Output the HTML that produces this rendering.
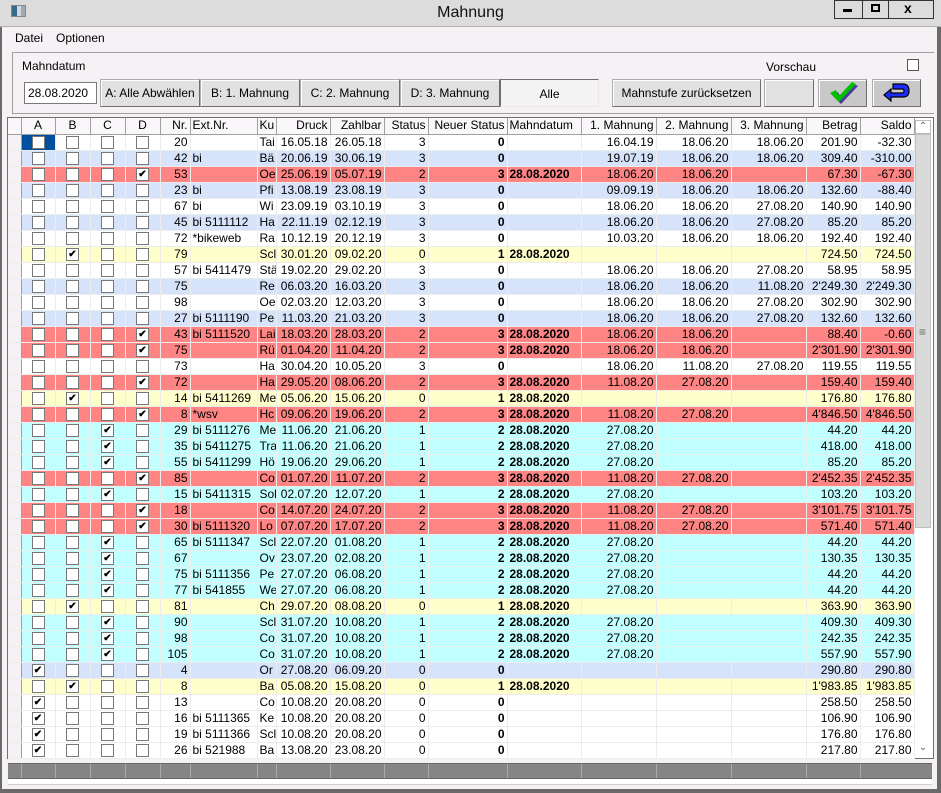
<!DOCTYPE html>
<html><head><meta charset="utf-8"><style>
*{box-sizing:border-box;margin:0;padding:0}
body{width:941px;height:793px;background:#f5f1f5;font-family:"Liberation Sans",sans-serif;font-size:12px;color:#000;position:relative;overflow:hidden}
.a{position:absolute}
.btn{position:absolute;top:79px;height:28px;background:#e1e1e1;border:1px solid #adadad;border-right-color:#6e6e6e;border-bottom-color:#6e6e6e;box-shadow:inset 1px 1px 0 #fff;text-align:center;line-height:26px;font-size:12px}
table{position:absolute;left:8px;top:118px;border-collapse:collapse;table-layout:fixed;width:906px}
td,th{height:16px;padding:0 2px;border-right:1px solid #ececec;border-bottom:1px solid #ececec;white-space:nowrap;overflow:hidden;font-weight:normal;text-align:right;line-height:15px}
th{background:#f9f7f9;border-right:1px solid #a0a0a0;border-bottom:1px solid #a0a0a0}
td.c,th.c{text-align:center}
td.l,th.l{text-align:left}
td.b{font-weight:bold}
td.h{background:#f5f1f5;border-right:1px solid #a0a0a0}
.cb{display:inline-block;width:13px;height:13px;border:1px solid #777;background:#fff;vertical-align:middle;font-size:10px;line-height:11px;text-align:center;font-weight:bold}
tr.w td{background:#fff}
tr.u td{background:#d7e3fa}
tr.r td{background:#ff8484}
tr.y td{background:#ffffcc}
tr.k td{background:#c2ffff}
tr td.h{background:#f5f1f5}
</style></head><body>
<!-- title bar -->
<div class="a" style="left:0;top:0;width:941px;height:27px;background:#dcdcdc;border-bottom:1px solid #b0b0b0"></div>
<div class="a" style="left:11px;top:5px;width:15px;height:12px;background:linear-gradient(90deg,#3a6a8a 0 40%,#d0d8e0 40% 70%,#a0a8b0 70%);border:1px solid #888"></div>
<div class="a" style="left:0;top:4px;width:941px;text-align:center;font-size:16px;color:#111">Mahnung</div>
<div class="a" style="left:834px;top:0;width:100px;height:19px;border:1px solid #333;background:#dcdcdc"></div>
<div class="a" style="left:862px;top:0;width:1px;height:19px;background:#333"></div>
<div class="a" style="left:888px;top:0;width:1px;height:19px;background:#333"></div>
<div class="a" style="left:843px;top:9px;width:9px;height:3px;background:#000"></div>
<div class="a" style="left:871px;top:4px;width:9px;height:8px;border:2px solid #000"></div>
<div class="a" style="left:904px;top:0;font-size:14px;font-weight:bold">x</div>
<div class="a" style="left:0;top:27px;width:2px;height:766px;background:#6a6a6a"></div>
<div class="a" style="left:937px;top:27px;width:4px;height:766px;background:#6a6a6a"></div>
<div class="a" style="left:0;top:789px;width:941px;height:4px;background:#6a6a6a"></div>
<!-- menu -->
<div class="a" style="left:15px;top:31px">Datei</div>
<div class="a" style="left:56px;top:31px">Optionen</div>
<!-- group -->
<div class="a" style="left:12px;top:52px;width:922px;height:62px;border:1px solid #a0a0a0;border-right:none"></div>
<div class="a" style="left:22px;top:59px">Mahndatum</div>
<div class="a" style="left:24px;top:82px;width:73px;height:22px;border:1px solid #7a7a7a;background:#fff;padding-left:3px;line-height:20px">28.08.2020</div>
<div class="btn" style="left:100px;width:100px">A: Alle Abwählen</div>
<div class="btn" style="left:200px;width:100px">B: 1. Mahnung</div>
<div class="btn" style="left:300px;width:100px">C: 2. Mahnung</div>
<div class="btn" style="left:400px;width:100px">D: 3. Mahnung</div>
<div class="btn" style="left:500px;width:99px;background:#f4f4f4;border-color:#6e6e6e #e8e8e8 #e8e8e8 #6e6e6e;box-shadow:none;line-height:28px">Alle</div>
<div class="btn" style="left:612px;width:149px">Mahnstufe zurücksetzen</div>
<div class="btn" style="left:764px;width:50px"></div>
<div class="btn" style="left:818px;width:49px;background:#c8c8c8">
<svg width="40" height="26" viewBox="0 0 40 26" style="position:absolute;left:4px;top:0"><path d="M9 15 L15 12 L18 18 L31 4 L35 6 L18 24 Z" fill="#4a3aa0"/><path d="M7 13 L13 10 L16 16 L29 2 L33 4 L16 22 Z" fill="#00c000"/></svg></div>
<div class="btn" style="left:872px;width:49px;background:#c8c8c8">
<svg width="40" height="26" viewBox="0 0 40 26" style="position:absolute;left:4px;top:0"><path d="M16 4 H26 Q32 4 32 11 Q32 17 26 17 H14 V21 L7 15 L14 9 V13 H25 Q27 13 27 11 Q27 9 25 9 H16 Z" fill="#1c2cff" stroke="#000" stroke-width="1.2"/></svg></div>
<div class="a" style="left:766px;top:60px">Vorschau</div>
<div class="a" style="left:907px;top:59px;width:12px;height:12px;border:1px solid #555;background:#fff"></div>
<!-- grid frame -->
<div class="a" style="left:7px;top:117px;width:927px;height:642px;border:1px solid #707070;background:#fff"></div>
<!-- scrollbar -->
<div class="a" style="left:914px;top:118px;width:18px;height:640px;background:#fff;border-left:1px solid #ddd"></div>
<div class="a" style="left:915px;top:120px;width:16px;height:14px;border:1px solid #bbb;background:#fff;text-align:center;font-size:10px;line-height:12px;color:#666">&#8963;</div>
<div class="a" style="left:915px;top:134px;width:16px;height:394px;background:#dadada;border:1px solid #c0c0c0"></div>
<div class="a" style="left:919px;top:325px;font-size:12px;color:#666">&#8801;</div>
<div class="a" style="left:915px;top:742px;width:16px;height:14px;text-align:center;font-size:10px;line-height:12px;color:#666">&#8964;</div>
<table>
<colgroup><col style="width:13px"><col style="width:34px"><col style="width:35px"><col style="width:35px"><col style="width:35px"><col style="width:30px"><col style="width:67px"><col style="width:19px"><col style="width:54px"><col style="width:54px"><col style="width:44px"><col style="width:79px"><col style="width:74px"><col style="width:75px"><col style="width:75px"><col style="width:75px"><col style="width:54px"><col style="width:54px"></colgroup>
<tr><th></th><th class="c">A</th><th class="c">B</th><th class="c">C</th><th class="c">D</th><th>Nr.</th><th class="l">Ext.Nr.</th><th class="l">Ku</th><th>Druck</th><th>Zahlbar</th><th>Status</th><th>Neuer Status</th><th class="l">Mahndatum</th><th>1. Mahnung</th><th>2. Mahnung</th><th>3. Mahnung</th><th>Betrag</th><th>Saldo</th></tr>
<tr class="w"><td class="h"></td><td class="c" style="background:#0050a0"><span class="cb"></span></td><td class="c"><span class="cb"></span></td><td class="c"><span class="cb"></span></td><td class="c"><span class="cb"></span></td><td>20</td><td class="l"></td><td class="l">Tai</td><td>16.05.18</td><td>26.05.18</td><td>3</td><td class="b">0</td><td class="l b"></td><td>16.04.19</td><td>18.06.20</td><td>18.06.20</td><td>201.90</td><td>-32.30</td></tr>
<tr class="u"><td class="h"></td><td class="c"><span class="cb"></span></td><td class="c"><span class="cb"></span></td><td class="c"><span class="cb"></span></td><td class="c"><span class="cb"></span></td><td>42</td><td class="l">bi</td><td class="l">Bä</td><td>20.06.19</td><td>30.06.19</td><td>3</td><td class="b">0</td><td class="l b"></td><td>19.07.19</td><td>18.06.20</td><td>18.06.20</td><td>309.40</td><td>-310.00</td></tr>
<tr class="r"><td class="h"></td><td class="c"><span class="cb"></span></td><td class="c"><span class="cb"></span></td><td class="c"><span class="cb"></span></td><td class="c"><span class="cb">✔</span></td><td>53</td><td class="l"></td><td class="l">Oe</td><td>25.06.19</td><td>05.07.19</td><td>2</td><td class="b">3</td><td class="l b">28.08.2020</td><td>18.06.20</td><td>18.06.20</td><td></td><td>67.30</td><td>-67.30</td></tr>
<tr class="u"><td class="h"></td><td class="c"><span class="cb"></span></td><td class="c"><span class="cb"></span></td><td class="c"><span class="cb"></span></td><td class="c"><span class="cb"></span></td><td>23</td><td class="l">bi</td><td class="l">Pfi</td><td>13.08.19</td><td>23.08.19</td><td>3</td><td class="b">0</td><td class="l b"></td><td>09.09.19</td><td>18.06.20</td><td>18.06.20</td><td>132.60</td><td>-88.40</td></tr>
<tr class="w"><td class="h"></td><td class="c"><span class="cb"></span></td><td class="c"><span class="cb"></span></td><td class="c"><span class="cb"></span></td><td class="c"><span class="cb"></span></td><td>67</td><td class="l">bi</td><td class="l">Wi</td><td>23.09.19</td><td>03.10.19</td><td>3</td><td class="b">0</td><td class="l b"></td><td>18.06.20</td><td>18.06.20</td><td>27.08.20</td><td>140.90</td><td>140.90</td></tr>
<tr class="u"><td class="h"></td><td class="c"><span class="cb"></span></td><td class="c"><span class="cb"></span></td><td class="c"><span class="cb"></span></td><td class="c"><span class="cb"></span></td><td>45</td><td class="l">bi 5111112</td><td class="l">Ha</td><td>22.11.19</td><td>02.12.19</td><td>3</td><td class="b">0</td><td class="l b"></td><td>18.06.20</td><td>18.06.20</td><td>27.08.20</td><td>85.20</td><td>85.20</td></tr>
<tr class="w"><td class="h"></td><td class="c"><span class="cb"></span></td><td class="c"><span class="cb"></span></td><td class="c"><span class="cb"></span></td><td class="c"><span class="cb"></span></td><td>72</td><td class="l">*bikeweb</td><td class="l">Ra</td><td>10.12.19</td><td>20.12.19</td><td>3</td><td class="b">0</td><td class="l b"></td><td>10.03.20</td><td>18.06.20</td><td>18.06.20</td><td>192.40</td><td>192.40</td></tr>
<tr class="y"><td class="h"></td><td class="c"><span class="cb"></span></td><td class="c"><span class="cb">✔</span></td><td class="c"><span class="cb"></span></td><td class="c"><span class="cb"></span></td><td>79</td><td class="l"></td><td class="l">Scl</td><td>30.01.20</td><td>09.02.20</td><td>0</td><td class="b">1</td><td class="l b">28.08.2020</td><td></td><td></td><td></td><td>724.50</td><td>724.50</td></tr>
<tr class="w"><td class="h"></td><td class="c"><span class="cb"></span></td><td class="c"><span class="cb"></span></td><td class="c"><span class="cb"></span></td><td class="c"><span class="cb"></span></td><td>57</td><td class="l">bi 5411479</td><td class="l">Stä</td><td>19.02.20</td><td>29.02.20</td><td>3</td><td class="b">0</td><td class="l b"></td><td>18.06.20</td><td>18.06.20</td><td>27.08.20</td><td>58.95</td><td>58.95</td></tr>
<tr class="u"><td class="h"></td><td class="c"><span class="cb"></span></td><td class="c"><span class="cb"></span></td><td class="c"><span class="cb"></span></td><td class="c"><span class="cb"></span></td><td>75</td><td class="l"></td><td class="l">Re</td><td>06.03.20</td><td>16.03.20</td><td>3</td><td class="b">0</td><td class="l b"></td><td>18.06.20</td><td>18.06.20</td><td>11.08.20</td><td>2'249.30</td><td>2'249.30</td></tr>
<tr class="w"><td class="h"></td><td class="c"><span class="cb"></span></td><td class="c"><span class="cb"></span></td><td class="c"><span class="cb"></span></td><td class="c"><span class="cb"></span></td><td>98</td><td class="l"></td><td class="l">Oe</td><td>02.03.20</td><td>12.03.20</td><td>3</td><td class="b">0</td><td class="l b"></td><td>18.06.20</td><td>18.06.20</td><td>27.08.20</td><td>302.90</td><td>302.90</td></tr>
<tr class="u"><td class="h"></td><td class="c"><span class="cb"></span></td><td class="c"><span class="cb"></span></td><td class="c"><span class="cb"></span></td><td class="c"><span class="cb"></span></td><td>27</td><td class="l">bi 5111190</td><td class="l">Pe</td><td>11.03.20</td><td>21.03.20</td><td>3</td><td class="b">0</td><td class="l b"></td><td>18.06.20</td><td>18.06.20</td><td>27.08.20</td><td>132.60</td><td>132.60</td></tr>
<tr class="r"><td class="h"></td><td class="c"><span class="cb"></span></td><td class="c"><span class="cb"></span></td><td class="c"><span class="cb"></span></td><td class="c"><span class="cb">✔</span></td><td>43</td><td class="l">bi 5111520</td><td class="l">Lai</td><td>18.03.20</td><td>28.03.20</td><td>2</td><td class="b">3</td><td class="l b">28.08.2020</td><td>18.06.20</td><td>18.06.20</td><td></td><td>88.40</td><td>-0.60</td></tr>
<tr class="r"><td class="h"></td><td class="c"><span class="cb"></span></td><td class="c"><span class="cb"></span></td><td class="c"><span class="cb"></span></td><td class="c"><span class="cb">✔</span></td><td>75</td><td class="l"></td><td class="l">Rü</td><td>01.04.20</td><td>11.04.20</td><td>2</td><td class="b">3</td><td class="l b">28.08.2020</td><td>18.06.20</td><td>18.06.20</td><td></td><td>2'301.90</td><td>2'301.90</td></tr>
<tr class="w"><td class="h"></td><td class="c"><span class="cb"></span></td><td class="c"><span class="cb"></span></td><td class="c"><span class="cb"></span></td><td class="c"><span class="cb"></span></td><td>73</td><td class="l"></td><td class="l">Ha</td><td>30.04.20</td><td>10.05.20</td><td>3</td><td class="b">0</td><td class="l b"></td><td>18.06.20</td><td>11.08.20</td><td>27.08.20</td><td>119.55</td><td>119.55</td></tr>
<tr class="r"><td class="h"></td><td class="c"><span class="cb"></span></td><td class="c"><span class="cb"></span></td><td class="c"><span class="cb"></span></td><td class="c"><span class="cb">✔</span></td><td>72</td><td class="l"></td><td class="l">Ha</td><td>29.05.20</td><td>08.06.20</td><td>2</td><td class="b">3</td><td class="l b">28.08.2020</td><td>11.08.20</td><td>27.08.20</td><td></td><td>159.40</td><td>159.40</td></tr>
<tr class="y"><td class="h"></td><td class="c"><span class="cb"></span></td><td class="c"><span class="cb">✔</span></td><td class="c"><span class="cb"></span></td><td class="c"><span class="cb"></span></td><td>14</td><td class="l">bi 5411269</td><td class="l">Me</td><td>05.06.20</td><td>15.06.20</td><td>0</td><td class="b">1</td><td class="l b">28.08.2020</td><td></td><td></td><td></td><td>176.80</td><td>176.80</td></tr>
<tr class="r"><td class="h"></td><td class="c"><span class="cb"></span></td><td class="c"><span class="cb"></span></td><td class="c"><span class="cb"></span></td><td class="c"><span class="cb">✔</span></td><td>8</td><td class="l">*wsv</td><td class="l">Hc</td><td>09.06.20</td><td>19.06.20</td><td>2</td><td class="b">3</td><td class="l b">28.08.2020</td><td>11.08.20</td><td>27.08.20</td><td></td><td>4'846.50</td><td>4'846.50</td></tr>
<tr class="k"><td class="h"></td><td class="c"><span class="cb"></span></td><td class="c"><span class="cb"></span></td><td class="c"><span class="cb">✔</span></td><td class="c"><span class="cb"></span></td><td>29</td><td class="l">bi 5111276</td><td class="l">Me</td><td>11.06.20</td><td>21.06.20</td><td>1</td><td class="b">2</td><td class="l b">28.08.2020</td><td>27.08.20</td><td></td><td></td><td>44.20</td><td>44.20</td></tr>
<tr class="k"><td class="h"></td><td class="c"><span class="cb"></span></td><td class="c"><span class="cb"></span></td><td class="c"><span class="cb">✔</span></td><td class="c"><span class="cb"></span></td><td>35</td><td class="l">bi 5411275</td><td class="l">Tra</td><td>11.06.20</td><td>21.06.20</td><td>1</td><td class="b">2</td><td class="l b">28.08.2020</td><td>27.08.20</td><td></td><td></td><td>418.00</td><td>418.00</td></tr>
<tr class="k"><td class="h"></td><td class="c"><span class="cb"></span></td><td class="c"><span class="cb"></span></td><td class="c"><span class="cb">✔</span></td><td class="c"><span class="cb"></span></td><td>55</td><td class="l">bi 5411299</td><td class="l">Hö</td><td>19.06.20</td><td>29.06.20</td><td>1</td><td class="b">2</td><td class="l b">28.08.2020</td><td>27.08.20</td><td></td><td></td><td>85.20</td><td>85.20</td></tr>
<tr class="r"><td class="h"></td><td class="c"><span class="cb"></span></td><td class="c"><span class="cb"></span></td><td class="c"><span class="cb"></span></td><td class="c"><span class="cb">✔</span></td><td>85</td><td class="l"></td><td class="l">Co</td><td>01.07.20</td><td>11.07.20</td><td>2</td><td class="b">3</td><td class="l b">28.08.2020</td><td>11.08.20</td><td>27.08.20</td><td></td><td>2'452.35</td><td>2'452.35</td></tr>
<tr class="k"><td class="h"></td><td class="c"><span class="cb"></span></td><td class="c"><span class="cb"></span></td><td class="c"><span class="cb">✔</span></td><td class="c"><span class="cb"></span></td><td>15</td><td class="l">bi 5411315</td><td class="l">Sol</td><td>02.07.20</td><td>12.07.20</td><td>1</td><td class="b">2</td><td class="l b">28.08.2020</td><td>27.08.20</td><td></td><td></td><td>103.20</td><td>103.20</td></tr>
<tr class="r"><td class="h"></td><td class="c"><span class="cb"></span></td><td class="c"><span class="cb"></span></td><td class="c"><span class="cb"></span></td><td class="c"><span class="cb">✔</span></td><td>18</td><td class="l"></td><td class="l">Co</td><td>14.07.20</td><td>24.07.20</td><td>2</td><td class="b">3</td><td class="l b">28.08.2020</td><td>11.08.20</td><td>27.08.20</td><td></td><td>3'101.75</td><td>3'101.75</td></tr>
<tr class="r"><td class="h"></td><td class="c"><span class="cb"></span></td><td class="c"><span class="cb"></span></td><td class="c"><span class="cb"></span></td><td class="c"><span class="cb">✔</span></td><td>30</td><td class="l">bi 5111320</td><td class="l">Lo</td><td>07.07.20</td><td>17.07.20</td><td>2</td><td class="b">3</td><td class="l b">28.08.2020</td><td>11.08.20</td><td>27.08.20</td><td></td><td>571.40</td><td>571.40</td></tr>
<tr class="k"><td class="h"></td><td class="c"><span class="cb"></span></td><td class="c"><span class="cb"></span></td><td class="c"><span class="cb">✔</span></td><td class="c"><span class="cb"></span></td><td>65</td><td class="l">bi 5111347</td><td class="l">Scl</td><td>22.07.20</td><td>01.08.20</td><td>1</td><td class="b">2</td><td class="l b">28.08.2020</td><td>27.08.20</td><td></td><td></td><td>44.20</td><td>44.20</td></tr>
<tr class="k"><td class="h"></td><td class="c"><span class="cb"></span></td><td class="c"><span class="cb"></span></td><td class="c"><span class="cb">✔</span></td><td class="c"><span class="cb"></span></td><td>67</td><td class="l"></td><td class="l">Ov</td><td>23.07.20</td><td>02.08.20</td><td>1</td><td class="b">2</td><td class="l b">28.08.2020</td><td>27.08.20</td><td></td><td></td><td>130.35</td><td>130.35</td></tr>
<tr class="k"><td class="h"></td><td class="c"><span class="cb"></span></td><td class="c"><span class="cb"></span></td><td class="c"><span class="cb">✔</span></td><td class="c"><span class="cb"></span></td><td>75</td><td class="l">bi 5111356</td><td class="l">Pe</td><td>27.07.20</td><td>06.08.20</td><td>1</td><td class="b">2</td><td class="l b">28.08.2020</td><td>27.08.20</td><td></td><td></td><td>44.20</td><td>44.20</td></tr>
<tr class="k"><td class="h"></td><td class="c"><span class="cb"></span></td><td class="c"><span class="cb"></span></td><td class="c"><span class="cb">✔</span></td><td class="c"><span class="cb"></span></td><td>77</td><td class="l">bi 541855</td><td class="l">We</td><td>27.07.20</td><td>06.08.20</td><td>1</td><td class="b">2</td><td class="l b">28.08.2020</td><td>27.08.20</td><td></td><td></td><td>44.20</td><td>44.20</td></tr>
<tr class="y"><td class="h"></td><td class="c"><span class="cb"></span></td><td class="c"><span class="cb">✔</span></td><td class="c"><span class="cb"></span></td><td class="c"><span class="cb"></span></td><td>81</td><td class="l"></td><td class="l">Ch</td><td>29.07.20</td><td>08.08.20</td><td>0</td><td class="b">1</td><td class="l b">28.08.2020</td><td></td><td></td><td></td><td>363.90</td><td>363.90</td></tr>
<tr class="k"><td class="h"></td><td class="c"><span class="cb"></span></td><td class="c"><span class="cb"></span></td><td class="c"><span class="cb">✔</span></td><td class="c"><span class="cb"></span></td><td>90</td><td class="l"></td><td class="l">Scl</td><td>31.07.20</td><td>10.08.20</td><td>1</td><td class="b">2</td><td class="l b">28.08.2020</td><td>27.08.20</td><td></td><td></td><td>409.30</td><td>409.30</td></tr>
<tr class="k"><td class="h"></td><td class="c"><span class="cb"></span></td><td class="c"><span class="cb"></span></td><td class="c"><span class="cb">✔</span></td><td class="c"><span class="cb"></span></td><td>98</td><td class="l"></td><td class="l">Co</td><td>31.07.20</td><td>10.08.20</td><td>1</td><td class="b">2</td><td class="l b">28.08.2020</td><td>27.08.20</td><td></td><td></td><td>242.35</td><td>242.35</td></tr>
<tr class="k"><td class="h"></td><td class="c"><span class="cb"></span></td><td class="c"><span class="cb"></span></td><td class="c"><span class="cb">✔</span></td><td class="c"><span class="cb"></span></td><td>105</td><td class="l"></td><td class="l">Co</td><td>31.07.20</td><td>10.08.20</td><td>1</td><td class="b">2</td><td class="l b">28.08.2020</td><td>27.08.20</td><td></td><td></td><td>557.90</td><td>557.90</td></tr>
<tr class="u"><td class="h"></td><td class="c"><span class="cb">✔</span></td><td class="c"><span class="cb"></span></td><td class="c"><span class="cb"></span></td><td class="c"><span class="cb"></span></td><td>4</td><td class="l"></td><td class="l">Or</td><td>27.08.20</td><td>06.09.20</td><td>0</td><td class="b">0</td><td class="l b"></td><td></td><td></td><td></td><td>290.80</td><td>290.80</td></tr>
<tr class="y"><td class="h"></td><td class="c"><span class="cb"></span></td><td class="c"><span class="cb">✔</span></td><td class="c"><span class="cb"></span></td><td class="c"><span class="cb"></span></td><td>8</td><td class="l"></td><td class="l">Ba</td><td>05.08.20</td><td>15.08.20</td><td>0</td><td class="b">1</td><td class="l b">28.08.2020</td><td></td><td></td><td></td><td>1'983.85</td><td>1'983.85</td></tr>
<tr class="w"><td class="h"></td><td class="c"><span class="cb">✔</span></td><td class="c"><span class="cb"></span></td><td class="c"><span class="cb"></span></td><td class="c"><span class="cb"></span></td><td>13</td><td class="l"></td><td class="l">Co</td><td>10.08.20</td><td>20.08.20</td><td>0</td><td class="b">0</td><td class="l b"></td><td></td><td></td><td></td><td>258.50</td><td>258.50</td></tr>
<tr class="w"><td class="h"></td><td class="c"><span class="cb">✔</span></td><td class="c"><span class="cb"></span></td><td class="c"><span class="cb"></span></td><td class="c"><span class="cb"></span></td><td>16</td><td class="l">bi 5111365</td><td class="l">Ke</td><td>10.08.20</td><td>20.08.20</td><td>0</td><td class="b">0</td><td class="l b"></td><td></td><td></td><td></td><td>106.90</td><td>106.90</td></tr>
<tr class="w"><td class="h"></td><td class="c"><span class="cb">✔</span></td><td class="c"><span class="cb"></span></td><td class="c"><span class="cb"></span></td><td class="c"><span class="cb"></span></td><td>19</td><td class="l">bi 5111366</td><td class="l">Scl</td><td>10.08.20</td><td>20.08.20</td><td>0</td><td class="b">0</td><td class="l b"></td><td></td><td></td><td></td><td>176.80</td><td>176.80</td></tr>
<tr class="w"><td class="h"></td><td class="c"><span class="cb">✔</span></td><td class="c"><span class="cb"></span></td><td class="c"><span class="cb"></span></td><td class="c"><span class="cb"></span></td><td>26</td><td class="l">bi 521988</td><td class="l">Ba</td><td>13.08.20</td><td>23.08.20</td><td>0</td><td class="b">0</td><td class="l b"></td><td></td><td></td><td></td><td>217.80</td><td>217.80</td></tr>
</table>
<!-- footer bar -->
<div class="a" style="left:8px;top:763px;width:924px;height:16px;background:#858585;border-top:1px solid #666;border-bottom:1px solid #666;
background-image:linear-gradient(90deg,transparent 13px,#aaa 13px 14px,transparent 14px 47px,#aaa 47px 48px,transparent 48px 82px,#aaa 82px 83px,transparent 83px 117px,#aaa 117px 118px,transparent 118px 152px,#aaa 152px 153px,transparent 153px 182px,#aaa 182px 183px,transparent 183px 249px,#aaa 249px 250px,transparent 250px 268px,#aaa 268px 269px,transparent 269px 322px,#aaa 322px 323px,transparent 323px 376px,#aaa 376px 377px,transparent 377px 420px,#aaa 420px 421px,transparent 421px 499px,#aaa 499px 500px,transparent 500px 573px,#aaa 573px 574px,transparent 574px 648px,#aaa 648px 649px,transparent 649px 723px,#aaa 723px 724px,transparent 724px 798px,#aaa 798px 799px,transparent 799px 852px,#aaa 852px 853px,transparent 853px)"></div>
<div class="a" style="left:8px;top:779px;width:924px;height:6px;background:#fff;border-bottom:1px solid #ccc"></div>
</body></html>
